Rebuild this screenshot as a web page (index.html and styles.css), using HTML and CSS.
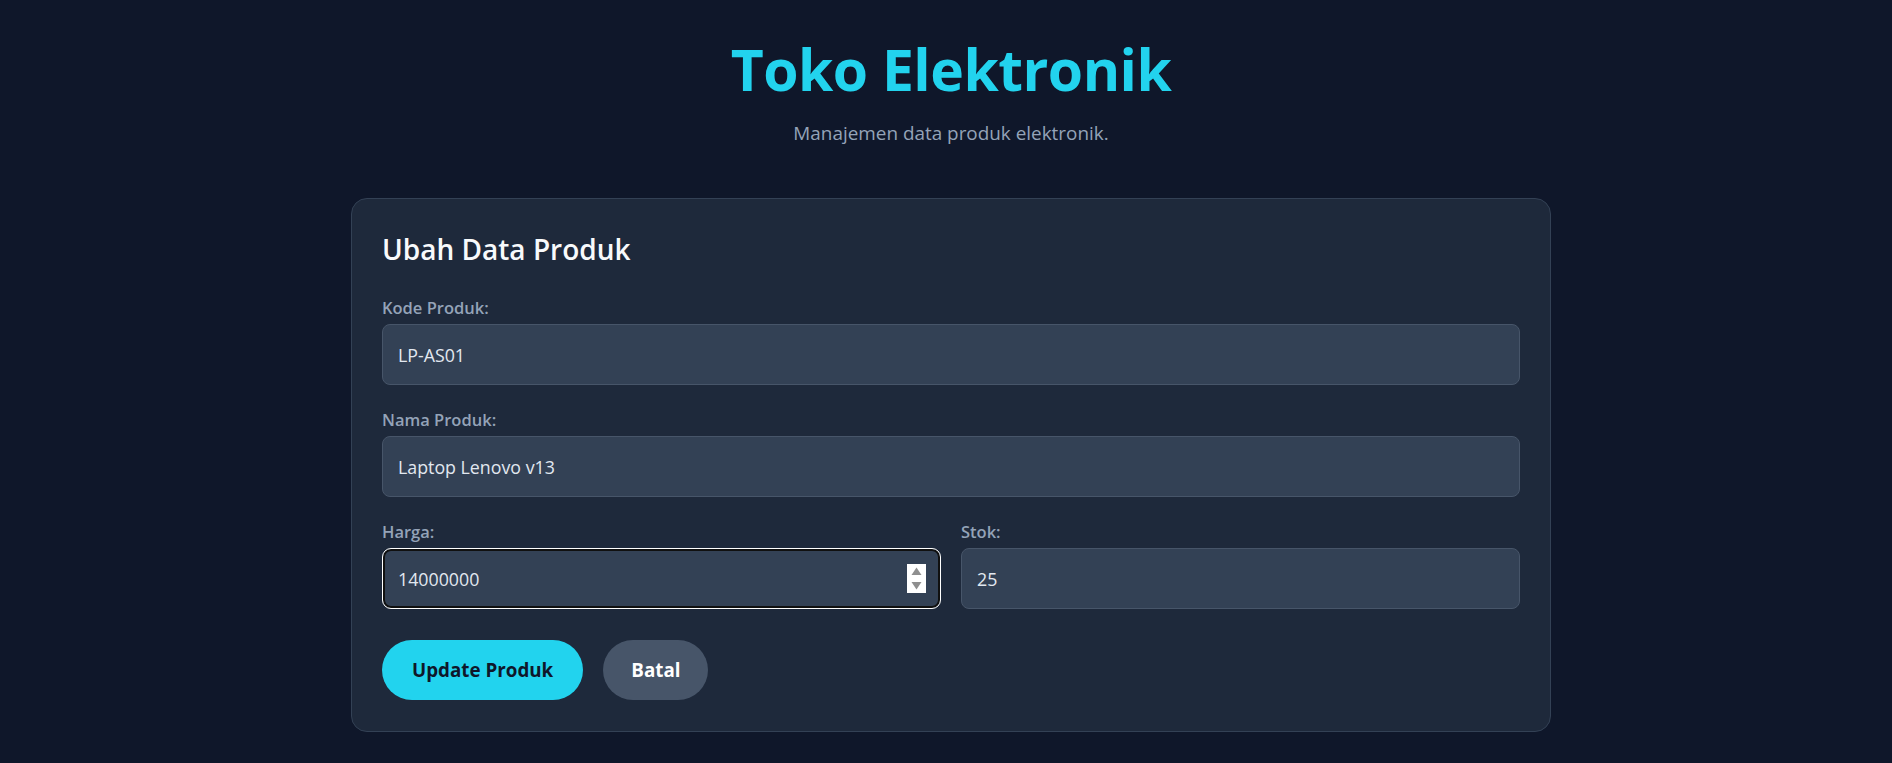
FILE: index.html
```html
<!DOCTYPE html>
<html lang="id">
<head>
<meta charset="utf-8">
<title>Toko Elektronik</title>
<link rel="stylesheet" href="styles.css">
</head>
<body>
  <header class="header">
    <h1 class="title">Toko Elektronik</h1>
    <p class="subtitle">Manajemen data produk elektronik.</p>
  </header>
  <main class="card">
    <h2 class="card-title">Ubah Data Produk</h2>
    <form class="form">
      <div class="field">
        <label class="label" for="kode">Kode Produk:</label>
        <input class="input" id="kode" type="text" value="LP-AS01">
      </div>
      <div class="field">
        <label class="label" for="nama">Nama Produk:</label>
        <input class="input" id="nama" type="text" value="Laptop Lenovo v13">
      </div>
      <div class="row">
        <div class="field">
          <label class="label" for="harga">Harga:</label>
          <div class="input-wrap">
            <input class="input input-focus" id="harga" type="text" value="14000000">
            <span class="spinner">
              <svg width="19" height="29" viewBox="0 0 19 29">
                <rect width="19" height="29" fill="#ffffff"/>
                <path d="M9.5 3.5 L14.5 11 L4.5 11 Z" fill="#8f8f8f"/>
                <path d="M4.5 18 L14.5 18 L9.5 25.5 Z" fill="#8f8f8f"/>
              </svg>
            </span>
          </div>
        </div>
        <div class="field">
          <label class="label" for="stok">Stok:</label>
          <input class="input" id="stok" type="text" value="25">
        </div>
      </div>
      <div class="actions">
        <button type="button" class="btn btn-primary">Update Produk</button>
        <button type="button" class="btn btn-secondary">Batal</button>
      </div>
    </form>
  </main>
</body>
</html>
```

FILE: styles.css
```css
* { box-sizing: border-box; }

html, body {
  background: #0f172a;
}

body {
  margin: 0;
  padding: 33px 0 40px 10px;
  font-family: "Open Sans", "Noto Sans", sans-serif;
  color: #e2e8f0;
}

.header {
  text-align: center;
}

.title {
  margin: 0;
  font-size: 57px;
  line-height: 72px;
  font-weight: 700;
  color: #22d3ee;
  letter-spacing: -0.5px;
}

.subtitle {
  margin: 15px 0 0;
  font-size: 18.9px;
  line-height: 26px;
  color: #94a3b8;
}

.card {
  width: 1200px;
  margin: 52px auto 0;
  background: #1e293b;
  border: 1px solid #334155;
  border-radius: 16px;
  padding: 30px 30px 31px;
}

.card-title {
  margin: 0 0 28px;
  font-size: 28px;
  line-height: 40px;
  font-weight: 600;
  color: #f8fafc;
}

.form {
  display: flex;
  flex-direction: column;
}

.field {
  display: flex;
  flex-direction: column;
  gap: 5px;
  margin-bottom: 24px;
}

.label {
  font-size: 16.5px;
  line-height: 22px;
  font-weight: 600;
  color: #94a3b8;
}

.input {
  width: 100%;
  height: 61px;
  padding: 16px 15px;
  font-family: inherit;
  font-size: 17.8px;
  line-height: 27px;
  color: #e2e8f0;
  background: #334155;
  border: 1px solid #475569;
  border-radius: 8px;
  outline: none;
}

.input-wrap {
  position: relative;
}

.input-focus {
  border-color: #ffffff;
  box-shadow: inset 0 0 0 2px #101010;
  border-radius: 9px;
}

.spinner {
  position: absolute;
  right: 15px;
  top: 16px;
  width: 19px;
  height: 29px;
  display: block;
}

.spinner svg { display: block; }

.row {
  display: grid;
  grid-template-columns: 1fr 1fr;
  gap: 20px;
}

.actions {
  display: flex;
  gap: 20px;
  margin-top: 7px;
}

.btn {
  height: 60px;
  padding: 0 30px;
  border: none;
  border-radius: 30px;
  font-family: inherit;
  font-size: 18.8px;
  font-weight: 700;
  cursor: pointer;
}

.btn-primary {
  background: #22d3ee;
  color: #0f172a;
}

.btn-secondary {
  background: #475569;
  color: #ffffff;
  padding: 0 28px;
}
```
